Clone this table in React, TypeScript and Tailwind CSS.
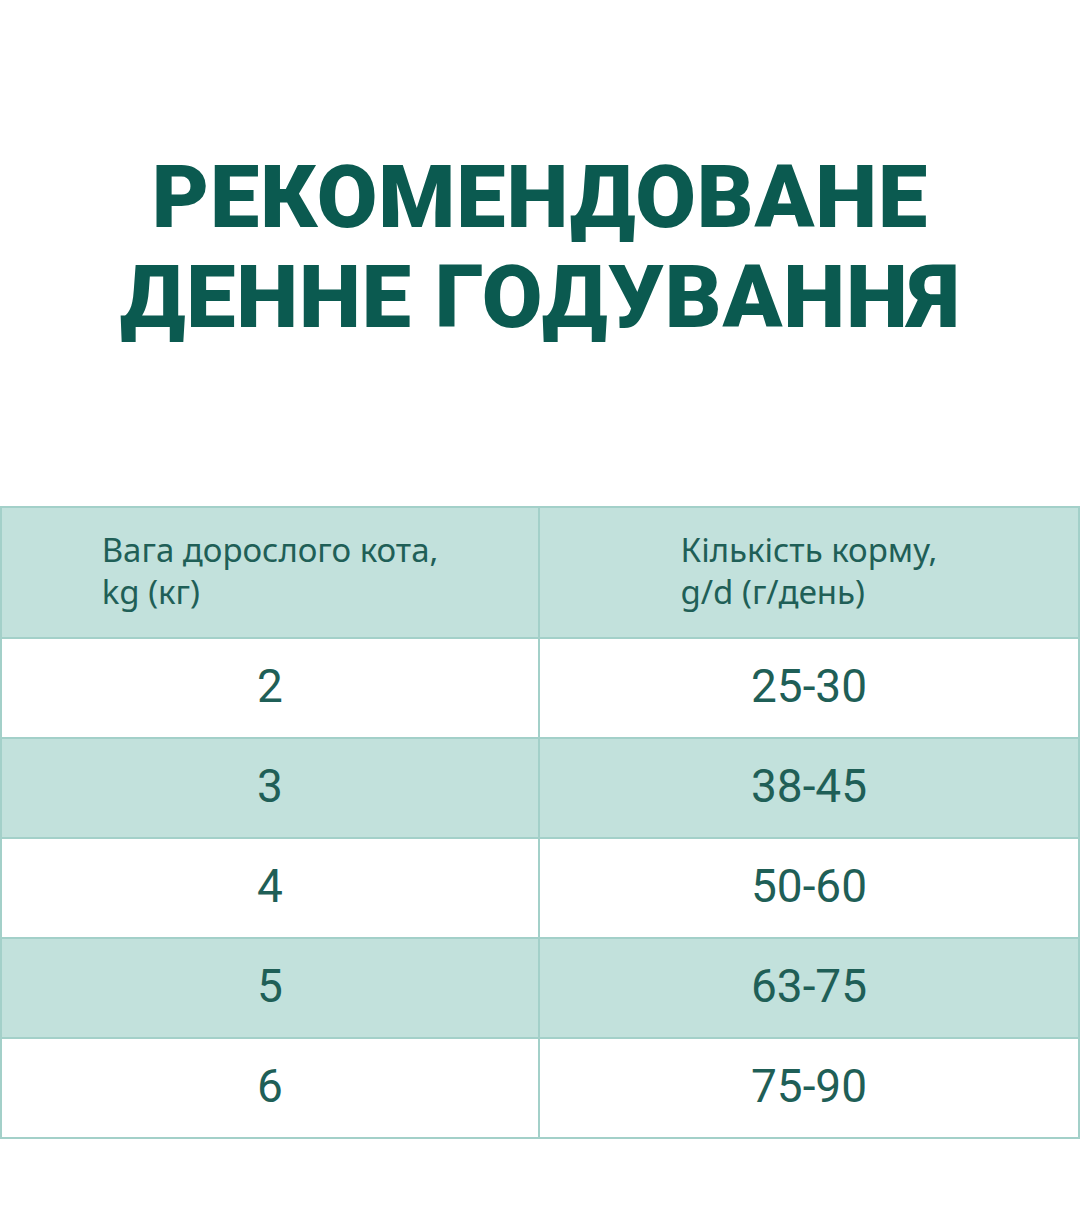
import React from 'react';

const rows = [
  { weight: '2', amount: '25-30' },
  { weight: '3', amount: '38-45' },
  { weight: '4', amount: '50-60' },
  { weight: '5', amount: '63-75' },
  { weight: '6', amount: '75-90' },
];

const App: React.FC = () => {
  return (
    <div className="w-[1080px] h-[1220px] bg-white font-['Noto_Sans',sans-serif]">
      {/* Title */}
      <div className="pt-[147px] h-[506px]">
        <h1 className="text-center font-['Roboto',sans-serif] font-black text-[88px] leading-[100px] tracking-[0.01em] text-[#0b5a50] uppercase">
          Рекомендоване
          <br />
          денне годування
        </h1>
      </div>

      {/* Table */}
      <div className="border-2 border-[#a3d0c9] text-[#1f5f57]">
        <div className="grid grid-cols-2 h-[129px] bg-[#c2e1dc]">
          <div className="flex items-center justify-center border-r-2 border-[#a3d0c9]">
            <div className="text-left text-[33px] leading-[42px] pb-1">
              Вага дорослого кота,
              <br />
              kg (кг)
            </div>
          </div>
          <div className="flex items-center justify-center">
            <div className="text-left text-[33px] leading-[42px] pb-1">
              Кількість корму,
              <br />
              g/d (г/день)
            </div>
          </div>
        </div>
        {rows.map((row, i) => (
          <div
            key={row.weight}
            className={`grid grid-cols-2 h-[100px] border-t-2 border-[#a3d0c9] font-['Roboto',sans-serif] text-[46px] ${
              i % 2 === 1 ? 'bg-[#c2e1dc]' : 'bg-white'
            }`}
          >
            <div className="flex items-center justify-center border-r-2 border-[#a3d0c9] pb-1">{row.weight}</div>
            <div className="flex items-center justify-center pb-1">{row.amount}</div>
          </div>
        ))}
      </div>
    </div>
  );
};

export default App;
